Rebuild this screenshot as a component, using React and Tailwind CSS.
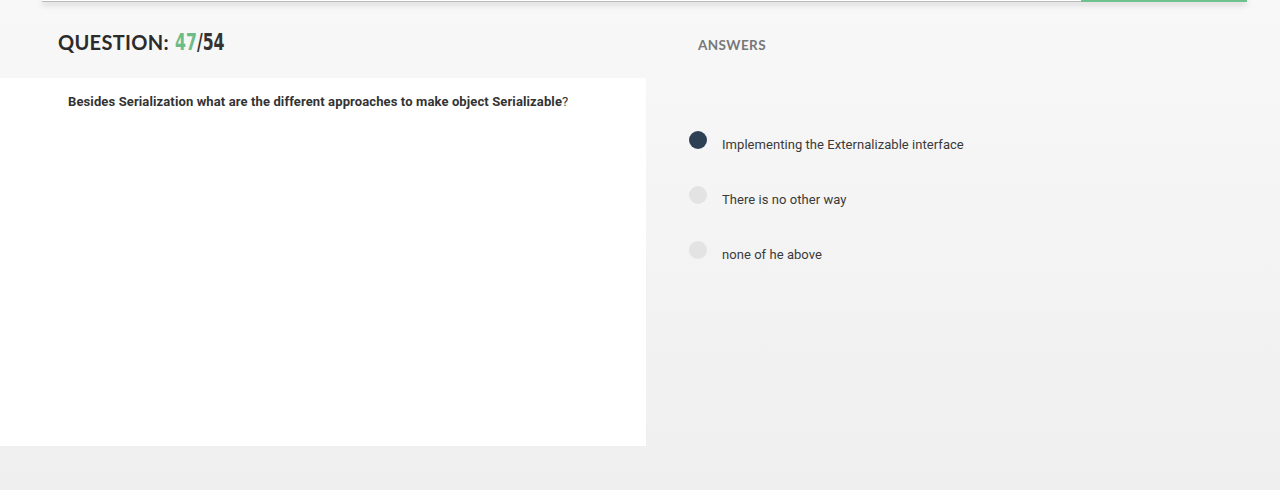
export default function App() {
  const answers = [
    { text: "Implementing the Externalizable interface", selected: true },
    { text: "There is no other way", selected: false },
    { text: "none of he above", selected: false },
  ];

  return (
    <div className="w-[1280px] h-[490px] overflow-hidden bg-gradient-to-b from-[#f8f8f8] to-[#efefef] font-['Roboto',sans-serif]">
      {/* top progress bar */}
      <div className="flex h-[2px] mx-[42px] w-[1205px] shadow-[0_2px_6px_rgba(0,0,0,0.3)]">
        <div className="flex-1 bg-white border-b border-[#bbb]" />
        <div className="w-[166px] bg-[#6fc08f]" />
      </div>

      <div className="flex">
        {/* question column */}
        <div className="w-[646px] flex flex-col">
          <div className="h-[76px] pl-[58px] pt-[28px]">
            <h2 className="text-[20px] leading-[24px] font-bold text-[#2b2b2b] font-['Lato',sans-serif] tracking-[0.3px]">
              QUESTION:{" "}
              <span className="font-['DejaVu_Sans_Condensed','Liberation_Sans_Narrow',sans-serif] font-bold text-[23px] leading-[24px] inline-block scale-x-[0.76] origin-left ml-[1px] tracking-normal">
                <span className="text-[#6cbb88]">47</span>
                <span className="text-[#333]">/54</span>
              </span>
            </h2>
          </div>
          <div className="bg-white h-[368px] pl-[68px] pt-[16px]">
            <p className="text-[13px] leading-[16px] text-[#333] tracking-[0.12px]">
              <span className="font-bold">
                Besides Serialization what are the different approaches to make object Serializable
              </span>
              ?
            </p>
          </div>
        </div>

        {/* answers column */}
        <div className="flex-1 pl-[52px] pt-[35px]">
          <div className="text-[13.5px] leading-[16px] font-bold text-[#777] font-['Lato',sans-serif] tracking-[0.4px]">
            ANSWERS
          </div>
          <div className="mt-[78px] flex flex-col gap-[37px] -ml-[9px]">
            {answers.map((a) => (
              <div key={a.text} className="flex items-start gap-[15px] h-[18px]">
                <div
                  className={
                    a.selected
                      ? "w-[18px] h-[18px] rounded-full bg-[#2d4054] shrink-0"
                      : "w-[18px] h-[18px] rounded-full bg-[#e3e3e3] shrink-0"
                  }
                />
                <span className="text-[13px] leading-[16px] text-[#3a3a3a] mt-[6px] tracking-[0.05px]">
                  {a.text}
                </span>
              </div>
            ))}
          </div>
        </div>
      </div>
    </div>
  );
}
